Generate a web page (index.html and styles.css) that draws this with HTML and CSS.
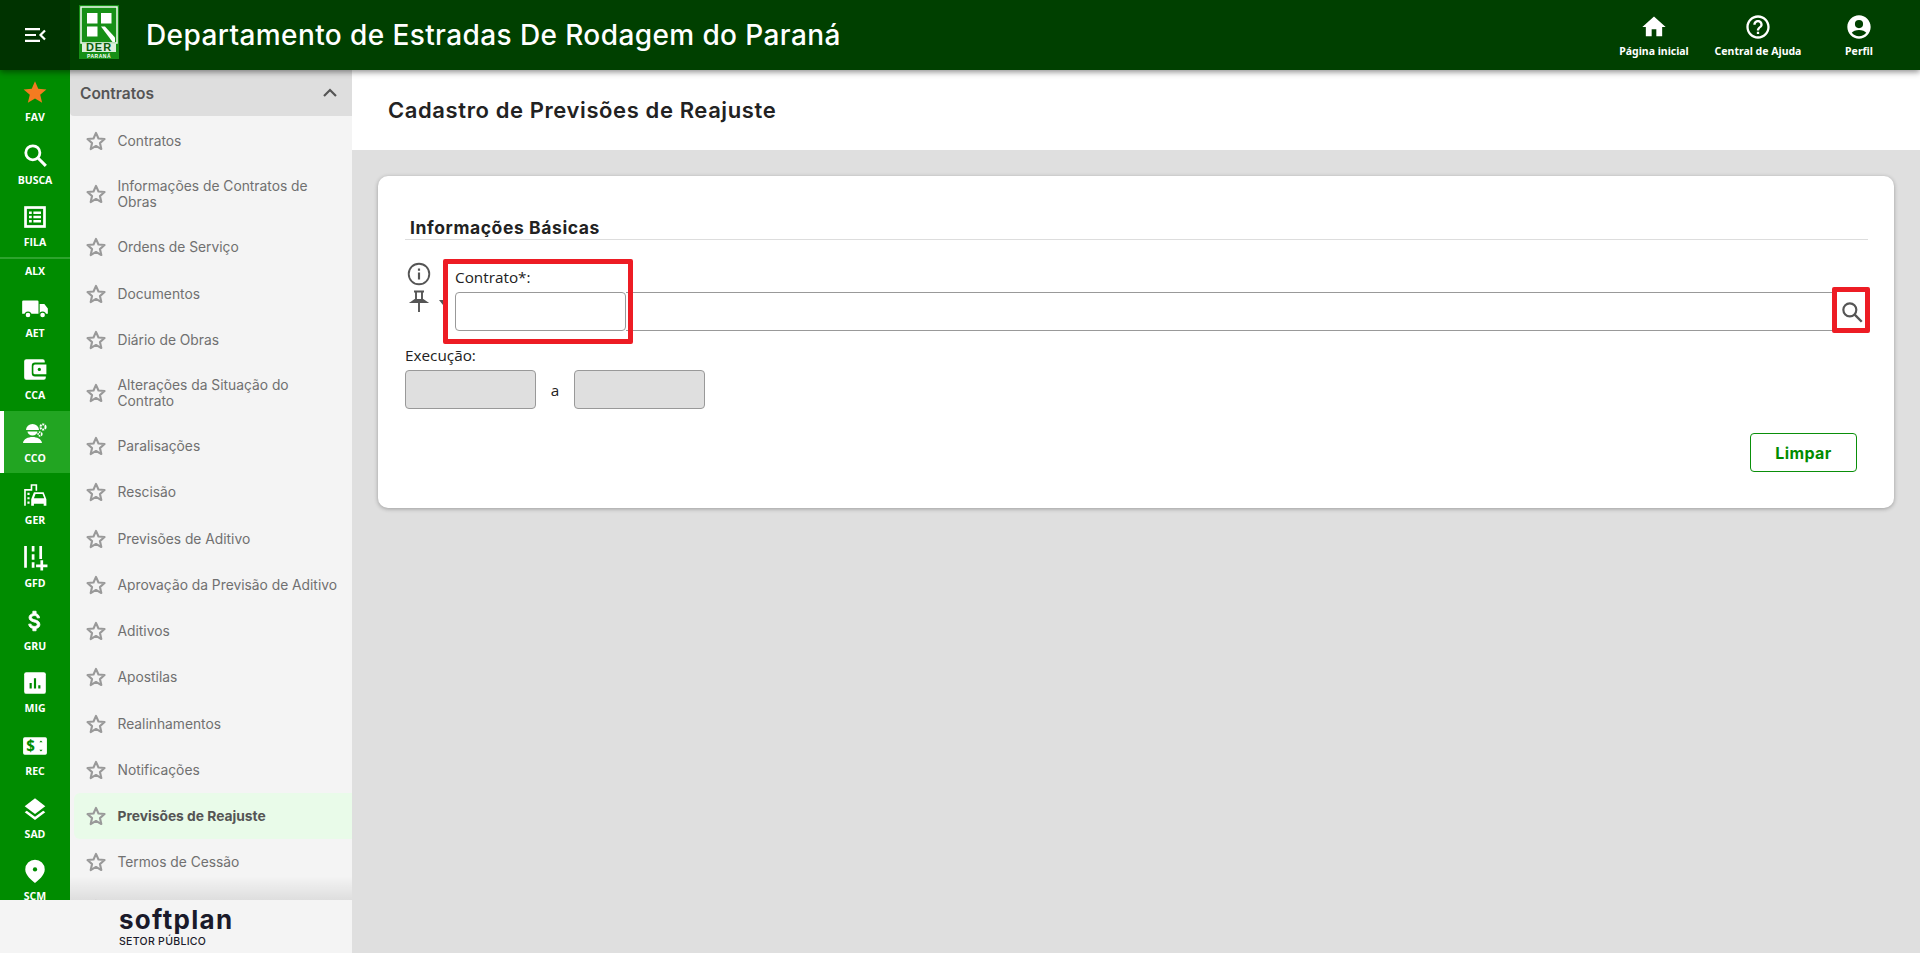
FILE: index.html
```html
<!DOCTYPE html>
<html lang="pt-BR">
<head>
<meta charset="utf-8">
<title>Cadastro de Previsões de Reajuste</title>
<link rel="stylesheet" href="styles.css">
</head>
<body>
<svg class="defs" width="0" height="0" aria-hidden="true">
  <symbol id="star" viewBox="0 0 24 24"><path d="M12 3.2l2.7 6.1 6.6.6-5 4.4 1.5 6.5L12 17.4l-5.8 3.4 1.5-6.5-5-4.4 6.6-.6z" fill="none" stroke="currentColor" stroke-width="2.3" stroke-linejoin="round"/></symbol>
</svg>
<header class="topbar">
  <button class="menu-btn" aria-label="Menu">
    <svg width="24" height="24" viewBox="0 0 24 24"><path d="M2 5h15v2.2H2zM2 10.9h11v2.2H2zM2 16.8h15v2.2H2z" fill="#fff"/><path d="M22 7.5L17.5 12l4.5 4.5" fill="none" stroke="#fff" stroke-width="2.2"/></svg>
  </button>
  <svg class="logo" width="40" height="54" viewBox="0 0 40 54">
    <rect width="40" height="54" fill="#168f16"/>
    <rect x="2" y="2" width="36" height="36" fill="none" stroke="#f2faf2" stroke-width="1.500"/>
    <rect x="8" y="8" width="10.500" height="10.500" fill="#fff"/>
    <rect x="22" y="8" width="10.500" height="10.500" fill="#fff"/>
    <rect x="8" y="21.500" width="10.500" height="10" fill="#fff"/>
    <path d="M22 21.500h4l10 11v4.500h-2.500z" fill="#fff"/>
    <rect x="3" y="38.500" width="34" height="8.500" fill="#dcefdc"/>
    <text x="20" y="46.400" class="logo-der" text-anchor="middle">DER</text>
    <text x="20" y="52.500" class="logo-pr" text-anchor="middle">PARANÁ</text>
  </svg>
  <h1 class="app-title">Departamento de Estradas De Rodagem do Paraná</h1>
  <nav class="top-links">
    <a class="top-link">
      <svg width="28" height="28" viewBox="0 0 24 24"><path d="M10 20v-6h4v6h5v-8h3L12 3 2 12h3v8z" fill="#fff"/></svg>
      <span>Página inicial</span>
    </a>
    <a class="top-link">
      <svg width="28" height="28" viewBox="0 0 24 24"><path d="M11 18h2v-2h-2zm1-16C6.48 2 2 6.48 2 12s4.48 10 10 10 10-4.48 10-10S17.52 2 12 2zm0 18c-4.41 0-8-3.59-8-8s3.59-8 8-8 8 3.59 8 8-3.59 8-8 8zm0-14c-2.21 0-4 1.79-4 4h2c0-1.1.9-2 2-2s2 .9 2 2c0 2-3 1.75-3 5h2c0-2.25 3-2.5 3-5 0-2.21-1.79-4-4-4z" fill="#fff"/></svg>
      <span>Central de Ajuda</span>
    </a>
    <a class="top-link">
      <svg width="28" height="28" viewBox="0 0 24 24"><path d="M12 2C6.48 2 2 6.48 2 12s4.48 10 10 10 10-4.48 10-10S17.52 2 12 2zm0 4a3.5 3.5 0 1 1 0 7 3.5 3.5 0 0 1 0-7zm0 14a8 8 0 0 1-6.2-3c.8-1.6 3.6-2.5 6.2-2.5s5.4.9 6.2 2.5A8 8 0 0 1 12 20z" fill="#fff"/></svg>
      <span>Perfil</span>
    </a>
  </nav>
</header>

<div class="shell">
  <aside class="left">
    <div class="left-scroll">
      <nav class="rail">
        <a class="rail-item"><svg width="26" height="26" viewBox="0 0 24 24"><path d="M12 2l3 7 7.5.6-5.7 4.9 1.8 7.4L12 18l-6.6 3.9 1.8-7.4L1.500 9.600 9 9z" fill="#f47b20"/></svg><span>FAV</span></a>
        <a class="rail-item"><svg width="26" height="26" viewBox="0 0 24 24"><circle cx="10" cy="10" r="6.500" fill="none" stroke="#fff" stroke-width="2.600"/><path d="M15 15l7 7" stroke="#fff" stroke-width="2.800"/></svg><span>BUSCA</span></a>
        <a class="rail-item rail-item-ruled"><svg width="26" height="26" viewBox="0 0 24 24"><path d="M2 2h20v20H2z" fill="#fff"/><path d="M4.500 4.500h15v15h-15z" fill="#008c00"/><path d="M6.500 7h2.500v2.200H6.500zM10.500 7h7v2.200h-7zM6.500 10.900h2.500v2.200H6.500zM10.500 10.900h7v2.200h-7zM6.500 14.800h2.500V17H6.500zM10.500 14.800h7V17h-7z" fill="#fff"/></svg><span>FILA</span></a>
        <a class="rail-text">ALX</a>
        <a class="rail-item rail-item-short"><svg width="28" height="28" viewBox="0 0 24 24"><path d="M2 5.500h12a1 1 0 0 1 1 1V17H1V6.500a1 1 0 0 1 1-1zM16 8.500h4l3 4V17h-7z" fill="#fff"/><circle cx="6" cy="18" r="2.500" fill="#fff" stroke="#008c00"/><circle cx="18.500" cy="18" r="2.500" fill="#fff" stroke="#008c00"/></svg><span>AET</span></a>
        <a class="rail-item"><svg width="26" height="26" viewBox="0 0 24 24"><path d="M4 2h15a2 2 0 0 1 2 2v1h-9a3 3 0 0 0-3 3v7a3 3 0 0 0 3 3h10v1a2 2 0 0 1-2 2H4a2 2 0 0 1-2-2V4a2 2 0 0 1 2-2zM12 7h10.500v9H12a1.500 1.500 0 0 1-1.500-1.500v-6A1.500 1.500 0 0 1 12 7z" fill="#fff"/><circle cx="16" cy="11.500" r="1.500" fill="#008c00"/></svg><span>CCA</span></a>
        <a class="rail-item rail-item-active"><svg width="26" height="26" viewBox="0 0 26 26"><path d="M4 10a6.500 6 0 0 1 13 0zM5.500 11.500h10a5 4 0 0 1-10 0zM1 23c.5-4 5-6 9.500-6s9 2 9.500 6z" fill="#fff"/><circle cx="21" cy="7" r="2.600" fill="none" stroke="#fff" stroke-width="2" stroke-dasharray="2 .8"/><circle cx="18" cy="14" r="1.800" fill="none" stroke="#fff" stroke-width="1.700" stroke-dasharray="1.500 .7"/></svg><span>CCO</span></a>
        <a class="rail-item"><svg width="26" height="26" viewBox="0 0 24 24"><path d="M8 2h6v6h-1.500V3.500h-3V8H3.500v14H2V6.500h6z" fill="#fff"/><path d="M5 10h2v2H5zM5 14h2v2H5zM5 18h2v2H5z" fill="#fff"/><path d="M11 9.500h9l2.500 6.500v6H20v-2h-9v2H8.500v-6zM12.500 11l-1.500 4h9.500L19 11z" fill="#fff" fill-rule="evenodd"/></svg><span>GER</span></a>
        <a class="rail-item"><svg width="26" height="26" viewBox="0 0 24 24"><path d="M2 1h2.500v20H2zM9 1h2.500v5H9zM9 8.500h2.500v5H9zM9 16h2.500v5H9zM16 1h2.500v12H16zM13 18h4v-4h2.500v4h4v2.500h-4v3H17v-3h-4z" fill="#fff"/></svg><span>GFD</span></a>
        <a class="rail-item"><svg width="26" height="26" viewBox="0 0 24 24"><path d="M11.800 10.900c-2.300-.6-3-1.200-3-2.100 0-1.100 1-1.800 2.700-1.800 1.800 0 2.400.8 2.500 2.100h2.200c-.1-1.700-1.100-3.300-3.200-3.800V3h-3v2.200C8.100 5.600 6.500 6.900 6.500 8.800c0 2.300 1.900 3.400 4.600 4.100 2.500.6 3 1.500 3 2.400 0 .7-.5 1.700-2.700 1.700-2 0-2.900-.9-3-2.100H6.200c.1 2.200 1.800 3.500 3.800 3.900V21h3v-2.100c1.900-.4 3.500-1.500 3.500-3.600 0-2.800-2.400-3.800-4.700-4.400z" fill="#fff" stroke="#fff" stroke-width=".8"/></svg><span>GRU</span></a>
        <a class="rail-item"><svg width="26" height="26" viewBox="0 0 24 24"><rect x="2" y="2" width="20" height="20" rx="2" fill="#fff"/><path d="M7 12h2v5H7zM11 7.500h2V17h-2zM15 14h2v3h-2z" fill="#008c00"/></svg><span>MIG</span></a>
        <a class="rail-item"><svg width="26" height="26" viewBox="0 0 24 24"><rect x="1" y="4" width="22" height="16" rx="1.500" fill="#fff"/><text x="8" y="17" class="rail-dollar" text-anchor="middle">$</text><path d="M16 8.500l1.500-1.500 1.500 1.500zM16 15.500l1.500 1.500 1.500-1.500z" fill="#008c00"/></svg><span>REC</span></a>
        <a class="rail-item"><svg width="26" height="26" viewBox="0 0 24 24"><path d="M12 2L2.500 9.500 12 16.500l9.500-7z" fill="#fff"/><path d="M12 19.200l-7.600-5.700-1.900 1.400L12 22.200l9.500-7.300-1.900-1.400z" fill="#fff"/></svg><span>SAD</span></a>
        <a class="rail-item"><svg width="26" height="26" viewBox="0 0 24 24"><path d="M12 1.500a9 9 0 0 0-9 9c0 5.500 6.500 10.500 9 12.500 2.500-2 9-7 9-12.500a9 9 0 0 0-9-9z" fill="#fff"/><circle cx="12" cy="10.500" r="2" fill="#008c00"/></svg><span>SCM</span></a>
      </nav>
      <nav class="side">
        <div class="side-head"><span>Contratos</span>
          <svg width="24" height="24" viewBox="0 0 24 24"><path d="M6 15l6-6 6 6" fill="none" stroke="#555" stroke-width="2.200"/></svg>
        </div>
        <a class="side-row"><svg class="star"><use href="#star"/></svg><span>Contratos</span></a>
        <a class="side-row side-row-tall"><svg class="star"><use href="#star"/></svg><span>Informações de Contratos de Obras</span></a>
        <a class="side-row"><svg class="star"><use href="#star"/></svg><span>Ordens de Serviço</span></a>
        <a class="side-row"><svg class="star"><use href="#star"/></svg><span>Documentos</span></a>
        <a class="side-row"><svg class="star"><use href="#star"/></svg><span>Diário de Obras</span></a>
        <a class="side-row side-row-tall"><svg class="star"><use href="#star"/></svg><span>Alterações da Situação do Contrato</span></a>
        <a class="side-row"><svg class="star"><use href="#star"/></svg><span>Paralisações</span></a>
        <a class="side-row"><svg class="star"><use href="#star"/></svg><span>Rescisão</span></a>
        <a class="side-row"><svg class="star"><use href="#star"/></svg><span>Previsões de Aditivo</span></a>
        <a class="side-row"><svg class="star"><use href="#star"/></svg><span>Aprovação da Previsão de Aditivo</span></a>
        <a class="side-row"><svg class="star"><use href="#star"/></svg><span>Aditivos</span></a>
        <a class="side-row"><svg class="star"><use href="#star"/></svg><span>Apostilas</span></a>
        <a class="side-row"><svg class="star"><use href="#star"/></svg><span>Realinhamentos</span></a>
        <a class="side-row"><svg class="star"><use href="#star"/></svg><span>Notificações</span></a>
        <a class="side-row side-row-active"><svg class="star"><use href="#star"/></svg><span>Previsões de Reajuste</span></a>
        <a class="side-row"><svg class="star"><use href="#star"/></svg><span>Termos de Cessão</span></a>
        <div class="side-row"><svg class="star"><use href="#star"/></svg></div>
      </nav>
    </div>
    <div class="brand">
      <div class="brand-inner">
        <span class="brand-name">softplan</span>
        <span class="brand-sub">SETOR PÚBLICO</span>
      </div>
    </div>
  </aside>

  <main class="content">
    <div class="page-head"><h2>Cadastro de Previsões de Reajuste</h2></div>
    <section class="card">
      <h3 class="section-title">Informações Básicas</h3>
      <div class="contract">
        <div class="contract-tools">
          <svg width="26" height="26" viewBox="0 0 24 24"><circle cx="12" cy="12" r="9.500" fill="none" stroke="#555" stroke-width="1.700"/><path d="M11 10.500h2V17h-2zM11 7h2v2h-2z" fill="#555"/></svg>
          <svg width="24" height="26" viewBox="0 0 24 24"><path d="M7 2.500h10M9 3v8M15 3v8M5 13l3-2h8l3 2zM12 13v10" fill="none" stroke="#555" stroke-width="1.900"/></svg>
        </div>
        <span class="caret"></span>
        <div class="contract-main">
          <label class="field-label">Contrato*:</label>
          <div class="contract-inputs">
            <input class="input input-code" type="text" aria-label="Contrato">
            <div class="input-rest"></div>
            <button class="search-btn" aria-label="Buscar">
              <svg width="26" height="26" viewBox="0 0 24 24"><circle cx="10" cy="10" r="6" fill="none" stroke="#555" stroke-width="2"/><path d="M14.500 14.500l6.500 6.500" stroke="#555" stroke-width="2.200"/></svg>
            </button>
            <span class="mark mark-code"></span>
            <span class="mark mark-search"></span>
          </div>
        </div>
      </div>
      <div class="exec">
        <label class="field-label">Execução:</label>
        <div class="exec-row">
          <input class="input input-off" type="text" disabled aria-label="Início">
          <span class="exec-sep">a</span>
          <input class="input input-off" type="text" disabled aria-label="Fim">
        </div>
      </div>
      <div class="actions"><button class="btn-clear">Limpar</button></div>
    </section>
  </main>
</div>
</body>
</html>
```
FILE: styles.css
```css
* { box-sizing: border-box; }
html, body { height: 100%; }
body {
  margin: 0;
  height: 953px;
  overflow: hidden;
  display: flex;
  flex-direction: column;
  font-family: "Inter", "Liberation Sans", sans-serif;
  background: #dfdfdf;
  color: #1f1f1f;
}
.defs { position: absolute; }
h1, h2, h3 { margin: 0; }

.topbar {
  height: 70px;
  flex: none;
  display: flex;
  align-items: center;
  background: #004000;
  box-shadow: 0 2px 6px rgba(0, 0, 0, .45);
  position: relative;
  z-index: 3;
}
.menu-btn {
  width: 70px;
  height: 70px;
  padding: 0;
  display: flex;
  align-items: center;
  justify-content: center;
  border: 0;
  background: #003300;
}
.logo { margin: 0 0 7px 9px; flex: none; }
.logo-der { font: 800 11px "Liberation Sans", sans-serif; letter-spacing: 1px; fill: #0c5c0c; }
.logo-pr { font: 700 5px "Liberation Sans", sans-serif; letter-spacing: .5px; fill: #fff; }
.app-title {
  margin-left: 27px;
  font-size: 28px;
  font-weight: 500;
  letter-spacing: .4px;
  color: #fff;
  white-space: nowrap;
}
.top-links { margin-left: auto; display: flex; margin-right: 13px; }
.top-link {
  width: 102px;
  display: flex;
  flex-direction: column;
  align-items: center;
  color: #fff;
  font: 700 10.500px "Noto Sans", sans-serif;
  line-height: 14px;
  white-space: nowrap;
  padding-top: 1px;
}
.top-link:nth-child(2) { width: 106px; }
.top-link:nth-child(3) { width: 96px; }
.top-link span { margin-top: 3px; }

.shell { flex: 1; display: flex; min-height: 0; }
.left { width: 352px; flex: none; display: flex; flex-direction: column; }
.left-scroll { flex: 1; min-height: 0; display: flex; overflow: hidden; }

.rail { width: 70px; flex: none; background: #008c00; }
.rail-item {
  height: 62.700px;
  display: flex;
  flex-direction: column;
  align-items: center;
  padding-top: 9px;
  color: #fff;
  font: 700 10.500px "Open Sans", sans-serif;
  line-height: 14px;
}
.rail-item svg { display: block; flex: none; }
.rail-item span { margin-top: 5px; }
.rail-item-ruled { height: 64px; border-bottom: 2px solid #2da42d; }
.rail-text {
  display: block;
  height: 24px;
  text-align: center;
  color: #fff;
  font: 700 10.500px/24px "Open Sans", sans-serif;
}
.rail-item-short { padding-top: 11px; height: 64.600px; }
.rail-item-short span { margin-top: 4px; }
.rail-item-active { background: #22a522; border-left: 4px solid #fff; padding-right: 4px; }
.rail-dollar { font: 700 14px "Open Sans", sans-serif; fill: #008c00; }

.side { flex: 1; min-width: 0; background: #f4f4f4; }
.side-head {
  height: 46px;
  margin-bottom: 2px;
  padding: 0 10px 0 10px;
  display: flex;
  align-items: center;
  justify-content: space-between;
  background: #dedede;
  border-bottom-left-radius: 4px;
  font-size: 15.500px;
  font-weight: 600;
  color: #555;
}
.side-row {
  height: 46.250px;
  display: flex;
  align-items: center;
  padding-left: 15px;
  font-size: 13.800px;
  line-height: 16px;
  color: #707070;
}
.side-row-tall { height: 60px; }
.side-row-active {
  margin-left: 4px;
  padding-left: 11px;
  background: #e9fbe9;
  border-radius: 6px 0 0 6px;
  font-weight: 700;
  color: #555;
}
.star { width: 22px; height: 22px; flex: none; margin-right: 10.500px; color: #999; }
.side-row span { max-width: 226px; }

.brand {
  height: 53px;
  flex: none;
  background: #f4f4f4;
  position: relative;
  display: flex;
  justify-content: center;
}
.brand::before {
  content: "";
  position: absolute;
  left: 70px;
  right: 0;
  top: -24px;
  height: 24px;
  background: linear-gradient(to bottom, rgba(0, 0, 0, 0), rgba(0, 0, 0, .09));
}
.brand-inner { display: flex; flex-direction: column; margin-left: 2px; width: 116px; padding-top: 8px; }
.brand-name { font: 700 26px/24px "Inter", sans-serif; color: #1a1a2a; letter-spacing: 1.300px; }
.brand-sub { font: 500 10.500px/14px "Inter", sans-serif; color: #1a1a2a; letter-spacing: .3px; margin-top: 3px; }

.content { flex: 1; min-width: 0; display: flex; flex-direction: column; }
.page-head {
  height: 80px;
  flex: none;
  padding-left: 36px;
  display: flex;
  align-items: center;
  background: #fff;
}
.page-head h2 { font-size: 22px; font-weight: 600; letter-spacing: .6px; color: #222; }
.card {
  margin: 26px 26px 0;
  height: 332px;
  padding: 42px 26px 0 27px;
  background: #fff;
  border-radius: 10px;
  box-shadow: 0 1px 4px rgba(0, 0, 0, .3);
}
.section-title {
  height: 22px;
  padding-left: 5px;
  border-bottom: 1px solid #ddd;
  font-size: 17.500px;
  line-height: 20px;
  font-weight: 700;
  letter-spacing: .6px;
  color: #222;
}
.contract { margin-top: 20px; display: flex; }
.contract-tools { width: 28px; display: flex; flex-direction: column; align-items: center; padding-top: 1px; flex: none; }
.contract-tools svg { display: block; margin-bottom: 1px; }
.caret {
  flex: none;
  width: 0;
  height: 0;
  margin: 40px 8px 0 6px;
  border: 4px solid transparent;
  border-top: 5px solid #555;
  border-bottom: 0;
}
.contract-main { flex: 1; min-width: 0; padding-top: 7px; }
.field-label {
  display: block;
  font: 400 15.300px/20px "Open Sans", sans-serif;
  color: #222;
}
.contract-inputs { display: flex; height: 39px; margin-top: 5px; position: relative; }
.input {
  height: 39px;
  padding: 0 8px;
  border: 1px solid #999;
  border-radius: 4px;
  background: #fff;
}
.input-code { width: 171px; flex: none; }
.input-rest { flex: 1; border-top: 1px solid #999; border-bottom: 1px solid #999; }
.search-btn {
  width: 33px;
  flex: none;
  padding: 0;
  display: flex;
  align-items: center;
  justify-content: center;
  border: 0;
  background: transparent;
}
.mark { position: absolute; border: 5px solid #ed1c24; border-radius: 2px; pointer-events: none; }
.mark-code { left: -12px; top: -33px; width: 190px; height: 85px; }
.mark-search { right: -2px; top: -5px; width: 38px; height: 46px; }

.exec { margin-top: 14px; }
.exec-row { display: flex; align-items: center; margin-top: 5px; }
.input-off { width: 131px; background: #dfdfdf; }
.exec-sep { width: 38px; text-align: center; font: 400 15.300px "Open Sans", sans-serif; color: #222; }
.actions { display: flex; justify-content: flex-end; margin-top: 24px; padding-right: 11px; }
.btn-clear {
  width: 107px;
  height: 39px;
  border: 1px solid #0a8f0a;
  border-radius: 4px;
  background: #fff;
  color: #008c00;
  font: 700 16px "Inter", sans-serif;
  letter-spacing: .4px;
}
```
